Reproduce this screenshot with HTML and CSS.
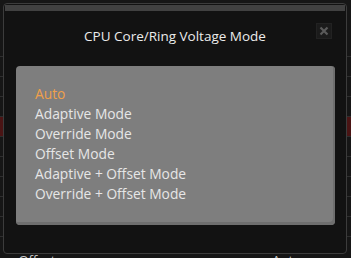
FILE: index.html
```html
<!DOCTYPE html>
<html>
<head>
<meta charset="utf-8">
<link rel="stylesheet" href="styles.css">
</head>
<body>
<div class="page">
  <div class="bg-rows">
    <div class="bg-row"></div>
    <div class="bg-row"></div>
    <div class="bg-row"></div>
    <div class="bg-row"></div>
    <div class="bg-row sel"></div>
    <div class="bg-row"></div>
    <div class="bg-row"></div>
    <div class="bg-row"></div>
    <div class="bg-row"></div>
    <div class="bg-row"></div>
    <div class="bg-row last"><span>m Offset</span><span class="val">Auto</span></div>
  </div>
  <div class="modal">
    <div class="modal-grip"></div>
    <div class="modal-head">
      <div class="title">CPU Core/Ring Voltage Mode</div>
      <div class="close">
        <svg width="10" height="10" viewBox="0 0 10 10"><path d="M1.5 1.5 L8.5 8.5 M8.5 1.5 L1.5 8.5" stroke="#5a5a5a" stroke-width="2.2"/></svg>
      </div>
    </div>
    <div class="panel">
      <div class="opt active">Auto</div>
      <div class="opt">Adaptive Mode</div>
      <div class="opt">Override Mode</div>
      <div class="opt">Offset Mode</div>
      <div class="opt">Adaptive + Offset Mode</div>
      <div class="opt">Override + Offset Mode</div>
    </div>
  </div>
</div>
</body>
</html>
```

FILE: styles.css
```css
html, body {
  margin: 0;
  padding: 0;
  background: #161616;
}
.page {
  position: relative;
  width: 351px;
  height: 258px;
  overflow: hidden;
  font-family: "Open Sans", "Noto Sans", sans-serif;
}
.bg-rows {
  display: flex;
  flex-direction: column;
  padding-top: 37px;
}
.bg-row {
  height: 19px;
  border-bottom: 1px solid #2e2e2e;
}
.bg-row.sel {
  background: #4a1414;
}
.bg-row.last {
  display: flex;
  justify-content: space-between;
  align-items: flex-start;
  height: 40px;
  padding: 0 50px 0 3px;
  color: #c8c8c8;
  font-size: 13px;
  line-height: 16px;
  border: none;
}
.bg-row.last span {
  margin-top: 15px;
}
.modal {
  position: absolute;
  left: 3px;
  top: 3px;
  width: 342px;
  height: 249px;
  background: #121212;
  border: 1px solid #3c3c3c;
  border-radius: 4px;
  display: flex;
  flex-direction: column;
}
.modal-grip {
  height: 6px;
  margin: 1px 1px 0;
  background-color: #1a1a1a;
  background-image: radial-gradient(circle, #444 0.7px, transparent 0.8px);
  background-size: 2px 2px;
}
.modal-head {
  position: relative;
  height: 55px;
  display: flex;
  justify-content: center;
}
.title {
  margin-top: 16px;
  color: #ececec;
  font-size: 13.5px;
  line-height: 18px;
}
.close {
  position: absolute;
  right: 14px;
  top: 12px;
  width: 14px;
  height: 14px;
  background: #1b1b1b;
  border: 1px solid #222;
  display: flex;
  align-items: center;
  justify-content: center;
}
.panel {
  margin: 0 11px 0 12px;
  height: 159px;
  background: #7e7e7e;
  border-radius: 4px;
  box-shadow: inset -2px -3px 0 #6e6e6e;
  padding: 18px 0 0 19px;
  box-sizing: border-box;
}
.opt {
  height: 20px;
  line-height: 20px;
  color: #e6e6e6;
  font-size: 13.8px;
}
.opt.active {
  color: #f0a04a;
}
```
